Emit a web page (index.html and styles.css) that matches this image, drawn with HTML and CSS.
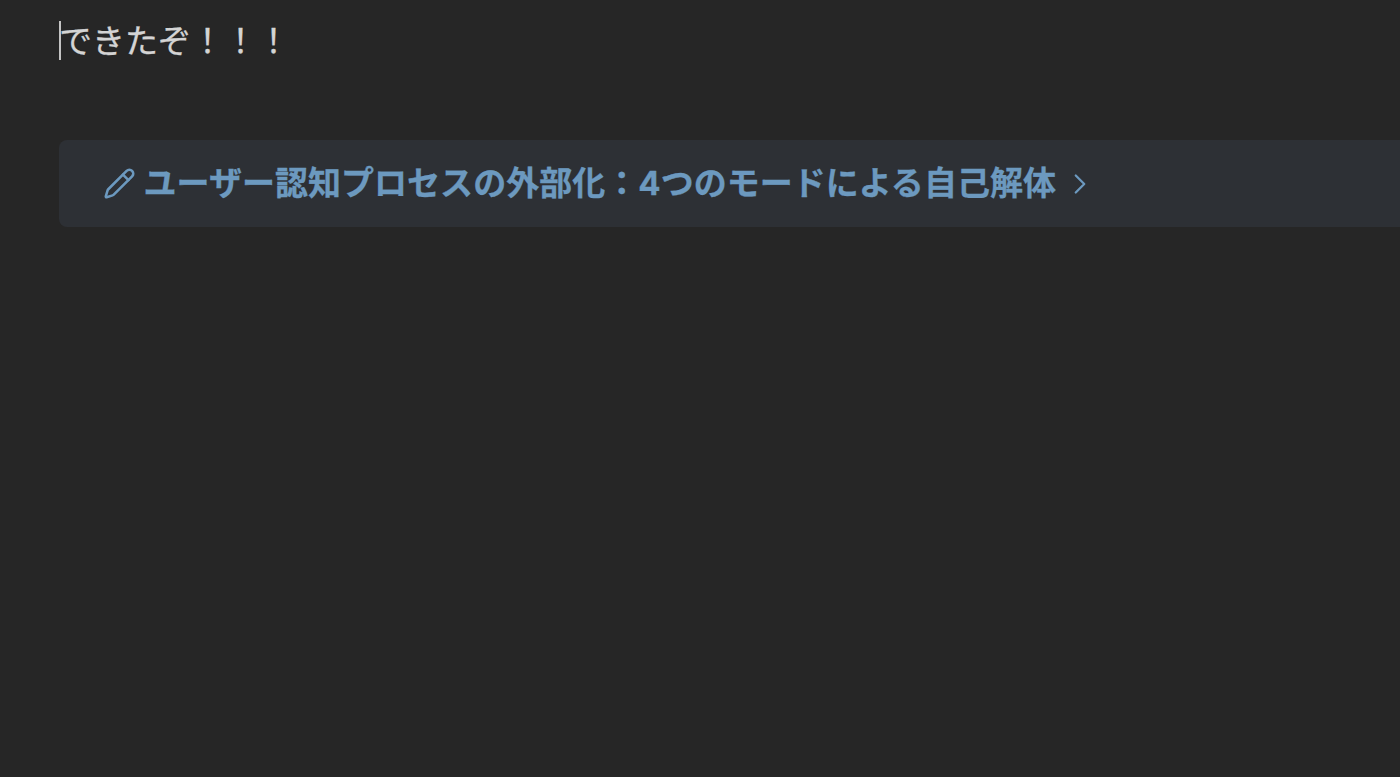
FILE: index.html
```html
<!DOCTYPE html>
<html lang="ja">
<head>
    <meta charset="UTF-8">
    <meta name="viewport" content="width=device-width, initial-scale=1.0">
    <title>できたぞ！！！</title>
    <link rel="stylesheet" href="styles.css">
</head>
<body>
    <main class="editor">
        <p class="line"><span class="cursor"></span>できたぞ！！！</p>

        <!-- Callout replié -->
        <div class="callout">
            <svg class="callout-icon" viewBox="0 0 24 24">
                <path d="M21.174 6.812a1 1 0 0 0-3.986-3.987L3.842 16.174a2 2 0 0 0-.5.83l-1.321 4.352a.5.5 0 0 0 .623.622l4.353-1.32a2 2 0 0 0 .83-.497z"/>
                <path d="m14.5 5.5 4 4"/>
            </svg>
            <div class="callout-title">ユーザー認知プロセスの外部化：4つのモードによる自己解体</div>
            <svg class="callout-fold" viewBox="0 0 24 24">
                <path d="m9 18 6-6-6-6"/>
            </svg>
        </div>
    </main>
</body>
</html>
```
FILE: styles.css
```css
body {
    margin: 0;
    background-color: #262626;
    color: #d4d4d4;
    font-family: Inter, "Noto Sans CJK JP", sans-serif;
    overflow: hidden;
}
.editor {
    padding: 21px 0 0 59px;
}
.line {
    display: flex;
    align-items: flex-start;
    height: 39px;
    margin: 0 0 80px;
    font-size: 33px;
    line-height: 41px;
    -webkit-text-stroke: 0.3px;
}
.cursor {
    width: 1.5px;
    height: 39px;
    margin-right: -1.5px;
    background-color: #c4c4c4;
}
.callout {
    display: flex;
    align-items: center;
    height: 87px;
    box-sizing: border-box;
    padding-left: 44px;
    border-radius: 8px 0 0 8px;
    background-color: #2d3035;
    color: #6c99bf;
}
.callout svg {
    flex: none;
    fill: none;
    stroke: currentColor;
    stroke-linecap: round;
    stroke-linejoin: round;
}
.callout-icon {
    width: 33px;
    height: 33px;
    stroke-width: 1.85;
}
.callout-title {
    margin-left: 7.5px;
    font-size: 33px;
    font-weight: 700;
    line-height: 43px;
    letter-spacing: 0.03px;
    -webkit-text-stroke: 0.3px;
    white-space: nowrap;
}
.callout-fold {
    width: 34px;
    height: 34px;
    margin-left: 6.5px;
    stroke-width: 1.6;
}
```
